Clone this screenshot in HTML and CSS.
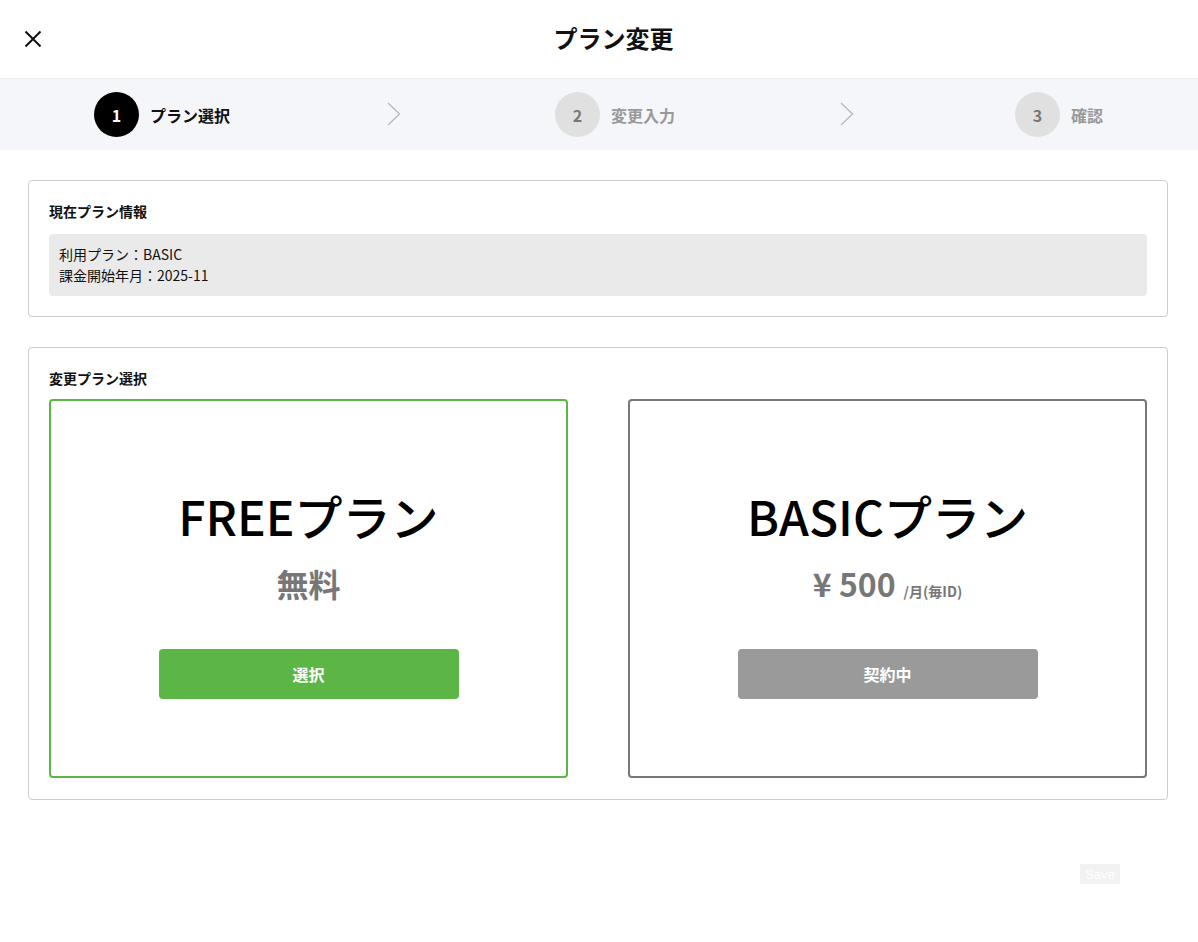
FILE: index.html
```html
<!DOCTYPE html>
<html lang="ja">
<head>
<meta charset="utf-8">
<title>プラン変更</title>
<link rel="stylesheet" href="styles.css">
</head>
<body>
<header class="header">
  <button class="close" aria-label="閉じる">
    <svg width="18" height="18" viewBox="0 0 18 18"><path d="M1.5 1.5 L16.5 16.5 M16.5 1.5 L1.5 16.5" stroke="#111" stroke-width="2" fill="none"/></svg>
  </button>
  <h1 class="title">プラン変更</h1>
</header>
<nav class="steps">
  <div class="step active"><span class="num">1</span><span class="label">プラン選択</span></div>
  <svg class="chev c1" width="14" height="24" viewBox="0 0 14 24"><path d="M1 1 L12.5 12 L1 23" stroke="#b8b8b8" stroke-width="1.3" fill="none"/></svg>
  <div class="step s2"><span class="num">2</span><span class="label">変更入力</span></div>
  <svg class="chev c2" width="14" height="24" viewBox="0 0 14 24"><path d="M1 1 L12.5 12 L1 23" stroke="#b8b8b8" stroke-width="1.3" fill="none"/></svg>
  <div class="step s3"><span class="num">3</span><span class="label">確認</span></div>
</nav>
<main class="main">
  <section class="card">
    <h2 class="card-title">現在プラン情報</h2>
    <div class="info">
      <div>利用プラン：BASIC</div>
      <div>課金開始年月：2025-11</div>
    </div>
  </section>
  <section class="card">
    <h2 class="card-title">変更プラン選択</h2>
    <div class="plans">
      <div class="plan selectable">
        <div class="plan-name">FREEプラン</div>
        <div class="price">無料</div>
        <button class="btn green">選択</button>
      </div>
      <div class="plan current">
        <div class="plan-name">BASICプラン</div>
        <div class="price">¥ 500<span class="unit">/月(毎ID)</span></div>
        <button class="btn grey">契約中</button>
      </div>
    </div>
  </section>
  <div class="footer"><button class="save">Save</button></div>
</main>
</body>
</html>
```
FILE: styles.css
```css
* { box-sizing: border-box; }
body {
  margin: 0;
  font-family: "Noto Sans CJK JP", "Noto Sans", sans-serif;
  color: #111;
  background: #fff;
}
.header {
  height: 79px;
  border-bottom: 1px solid #ececec;
  display: flex;
  align-items: center;
  justify-content: center;
  padding-left: 29px;
  position: relative;
}
.close {
  position: absolute;
  left: 24px;
  top: 30px;
  width: 18px;
  height: 18px;
  padding: 0;
  border: 0;
  background: none;
  display: block;
}
.close svg { display: block; }
.title {
  margin: -3px 0 0;
  font-size: 24px;
  font-weight: 700;
  line-height: 1;
}
.steps {
  height: 71px;
  background: #f5f6fa;
  display: flex;
  align-items: center;
  padding: 0 0 0 94px;
}
.step {
  display: flex;
  align-items: center;
  gap: 11px;
}
.c1 { margin-left: 157px; }
.s2 { margin-left: 154px; }
.c2 { margin-left: 165px; }
.s3 { margin-left: 161px; }
.num {
  width: 45px;
  height: 45px;
  border-radius: 50%;
  background: #e0e0e0;
  color: #777;
  font-weight: 700;
  font-size: 16px;
  display: flex;
  align-items: center;
  justify-content: center;
}
.label {
  font-size: 16px;
  font-weight: 700;
  color: #999;
}
.step.active .num { background: #000; color: #fff; }
.step.active .label { color: #111; }
.chev { display: block; margin-top: -2px; }
.main {
  padding: 30px 30px 0 28px;
}
.card {
  border: 1px solid #cdcdcd;
  border-radius: 4px;
  padding: 20px;
  margin-bottom: 30px;
}
.card-title {
  margin: 0 0 12px;
  font-size: 14px;
  font-weight: 700;
  line-height: 21px;
}
.info {
  background: #eaeaea;
  border-radius: 4px;
  padding: 10px;
  font-size: 14px;
  line-height: 21px;
}
.card + .card .card-title { margin-bottom: 10px; }
.card + .card { padding-bottom: 21px; margin-bottom: 0; }
.plans {
  display: grid;
  grid-template-columns: 1fr 1fr;
  column-gap: 60px;
}
.plan {
  border: 2px solid #777;
  border-radius: 4px;
  display: flex;
  flex-direction: column;
  align-items: center;
  padding: 85px 0 77px;
}
.plan.selectable { border-color: #5bb646; }
.plan-name {
  font-size: 48px;
  line-height: 58px;
  font-weight: 500;
  color: #000;
}
.price {
  margin-top: 17px;
  height: 44px;
  font-size: 32px;
  line-height: 44px;
  font-weight: 700;
  color: #777;
}
.unit {
  font-size: 14px;
  line-height: 1;
  margin-left: 8px;
}
.btn {
  margin-top: 44px;
  width: 300px;
  height: 50px;
  border: 0;
  border-radius: 4px;
  color: #fff;
  font-family: inherit;
  font-size: 16px;
  font-weight: 700;
}
.btn.green { background: #5bb646; }
.btn.grey { background: #9a9a9a; }
.footer {
  display: flex;
  justify-content: flex-end;
  padding: 64px 48px 0 0;
}
.save {
  width: 40px;
  height: 20px;
  border: 0;
  padding: 0;
  background: #f2f2f2;
  color: #fff;
  font-family: "Liberation Sans", sans-serif;
  font-size: 13px;
}
```
